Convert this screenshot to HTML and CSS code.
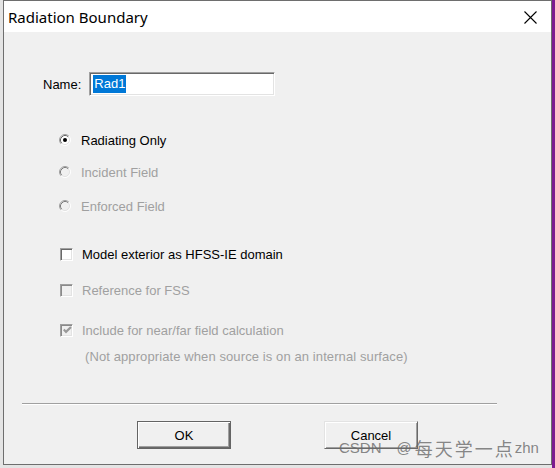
FILE: index.html
```html
<!DOCTYPE html>
<html>
<head>
<meta charset="utf-8">
<link rel="stylesheet" href="styles.css">
</head>
<body>
<div class="dialog">
  <div class="titlebar">
    <span class="title">Radiation Boundary</span>
    <svg class="close" width="13" height="13" viewBox="0 0 13 13"><path d="M0.5 0.5 L12.5 12.5 M12.5 0.5 L0.5 12.5" stroke="#000" stroke-width="1.1" fill="none"/></svg>
  </div>
  <div class="content">
    <div class="name-row">
      <span class="name-label">Name:</span>
      <div class="textbox"><span class="sel">Rad1</span></div>
    </div>

    <div class="opt radio-row row-r1">
      <svg class="radio" width="12" height="12" viewBox="0 0 12 12">
        <circle cx="6" cy="6" r="4.5" fill="#fff"/>
        <path d="M2.11 9.89 A5.5 5.5 0 0 1 9.89 2.11" stroke="#a0a0a0" fill="none"/>
        <path d="M2.82 9.18 A4.5 4.5 0 0 1 9.18 2.82" stroke="#696969" fill="none"/>
        <path d="M9.89 2.11 A5.5 5.5 0 0 1 2.11 9.89" stroke="#ffffff" fill="none"/>
        <path d="M9.18 2.82 A4.5 4.5 0 0 1 2.82 9.18" stroke="#e3e3e3" fill="none"/>
        <circle cx="6" cy="6" r="2" fill="#000"/>
      </svg>
      <span class="label">Radiating Only</span>
    </div>
    <div class="opt radio-row row-r2 disabled">
      <svg class="radio" width="12" height="12" viewBox="0 0 12 12">
        <circle cx="6" cy="6" r="4.5" fill="#f0f0f0"/>
        <path d="M2.11 9.89 A5.5 5.5 0 0 1 9.89 2.11" stroke="#a0a0a0" fill="none"/>
        <path d="M2.82 9.18 A4.5 4.5 0 0 1 9.18 2.82" stroke="#7c7c7c" fill="none"/>
        <path d="M9.89 2.11 A5.5 5.5 0 0 1 2.11 9.89" stroke="#ffffff" fill="none"/>
        <path d="M9.18 2.82 A4.5 4.5 0 0 1 2.82 9.18" stroke="#e3e3e3" fill="none"/>
      </svg>
      <span class="label">Incident Field</span>
    </div>
    <div class="opt radio-row row-r3 disabled">
      <svg class="radio" width="12" height="12" viewBox="0 0 12 12">
        <circle cx="6" cy="6" r="4.5" fill="#f0f0f0"/>
        <path d="M2.11 9.89 A5.5 5.5 0 0 1 9.89 2.11" stroke="#a0a0a0" fill="none"/>
        <path d="M2.82 9.18 A4.5 4.5 0 0 1 9.18 2.82" stroke="#7c7c7c" fill="none"/>
        <path d="M9.89 2.11 A5.5 5.5 0 0 1 2.11 9.89" stroke="#ffffff" fill="none"/>
        <path d="M9.18 2.82 A4.5 4.5 0 0 1 2.82 9.18" stroke="#e3e3e3" fill="none"/>
      </svg>
      <span class="label">Enforced Field</span>
    </div>

    <div class="opt check-row row-c1">
      <span class="checkbox"></span>
      <span class="label">Model exterior as HFSS-IE domain</span>
    </div>
    <div class="opt check-row row-c2 disabled">
      <span class="checkbox"></span>
      <span class="label">Reference for FSS</span>
    </div>
    <div class="opt check-row row-c3 disabled">
      <span class="checkbox">
        <svg width="9" height="9" viewBox="0 0 9 9"><polyline points="0.8,3.6 3,5.9 8,1" stroke="#999" stroke-width="2.2" fill="none"/></svg>
      </span>
      <span class="label">Include for near/far field calculation</span>
    </div>
    <div class="note">(Not appropriate when source is on an internal surface)</div>

    <div class="sep"></div>

    <div class="buttons">
      <div class="btn btn-default">OK</div>
      <div class="btn">Cancel</div>
    </div>
  </div>
</div>
<div class="watermark"><span class="wm-lat">CSDN</span><span class="wm-at">@</span><span class="wm-cjk">每天学一点</span><span class="wm-lat">zhn</span></div>
</body>
</html>
```

FILE: styles.css
```css
* { box-sizing: border-box; }
html, body { margin: 0; padding: 0; }
body {
  width: 555px;
  height: 468px;
  position: relative;
  overflow: hidden;
  background: linear-gradient(to right, #e4e4e4 0, #e4e4e4 552px, #7c1b8f 552px);
  font-family: "Liberation Sans", Arial, sans-serif;
  font-size: 13px;
  color: #000;
}
.dialog {
  margin-left: 3px;
  width: 549px;
  height: 465px;
  border: 1px solid #6e6e6e;
  background: #f0f0f0;
  display: flex;
  flex-direction: column;
}
.titlebar {
  height: 31px;
  flex: none;
  background: #fff;
  display: flex;
  align-items: center;
  padding-left: 4px;
}
.title {
  font-family: "Noto Sans", sans-serif;
  font-size: 15px;
  color: #000;
}
.close {
  margin-left: auto;
  margin-right: 14px;
  margin-top: 1px;
}
.content { flex: 1; }
.name-row {
  display: flex;
  align-items: center;
  height: 24px;
  margin: 40px 0 0 39px;
}
.name-label { color: #000; }
.textbox {
  margin-left: 8px;
  width: 186px;
  height: 24px;
  background: #fff;
  border-top: 1px solid #a0a0a0;
  border-left: 1px solid #a0a0a0;
  border-right: 1px solid #fff;
  border-bottom: 1px solid #fff;
  box-shadow: inset 1px 1px 0 #696969, inset -1px -1px 0 #e3e3e3;
  padding: 2px 0 0 3px;
}
.sel {
  display: inline-block;
  height: 18px;
  line-height: 18px;
  padding: 0 1px;
  background: #0078d7;
  color: #fff;
}
.opt {
  display: flex;
  align-items: center;
  height: 20px;
}
.radio-row { margin-left: 55px; }
.radio { margin-right: 10px; flex: none; }
.check-row { margin-left: 56px; }
.checkbox {
  flex: none;
  width: 13px;
  height: 13px;
  margin-right: 9px;
  background: #fff;
  border-top: 1px solid #a0a0a0;
  border-left: 1px solid #a0a0a0;
  border-right: 1px solid #fff;
  border-bottom: 1px solid #fff;
  box-shadow: inset 1px 1px 0 #696969, inset -1px -1px 0 #e3e3e3;
  display: flex;
  align-items: center;
  justify-content: center;
}
.disabled { color: #a0a0a0; }
.disabled .checkbox {
  background: #f0f0f0;
  box-shadow: inset 1px 1px 0 #8a8a8a, inset -1px -1px 0 #e3e3e3;
}
.checkbox svg { margin: 1px 0 0 1px; }
.row-r1 { margin-top: 34px; }
.row-r2 { margin-top: 12px; }
.row-r3 { margin-top: 14px; }
.row-c1 { margin-top: 28px; }
.row-c2 { margin-top: 16px; }
.row-c3 { margin-top: 20px; }
.note {
  margin: 7px 0 0 81px;
  height: 20px;
  line-height: 20px;
  color: #a0a0a0;
  letter-spacing: 0.1px;
}
.sep {
  margin: 36px 0 0 18px;
  width: 475px;
  height: 2px;
  border-top: 1px solid #a0a0a0;
  border-bottom: 1px solid #fff;
}
.buttons {
  display: flex;
  gap: 93px;
  margin-top: 16px;
  padding-left: 133px;
}
.btn {
  width: 94px;
  height: 28px;
  display: flex;
  align-items: center;
  justify-content: center;
  background: #f0f0f0;
  border: 1px solid;
  border-color: #e3e3e3 #696969 #696969 #e3e3e3;
  box-shadow: inset 1px 1px 0 #fff, inset -1px -1px 0 #a0a0a0;
  color: #000;
}
.btn-default {
  border: 1px solid #646464;
  box-shadow: inset 1px 1px 0 #fff, inset -1px -1px 0 #696969, inset -2px -2px 0 #a0a0a0;
}
.watermark {
  position: absolute;
  left: 339px;
  top: 437px;
  height: 22px;
  line-height: 22px;
  color: rgba(105, 105, 105, 0.8);
  white-space: nowrap;
  display: flex;
  align-items: center;
}
.wm-lat {
  font-family: "Liberation Sans", Arial, sans-serif;
  font-size: 15px;
}
.wm-at {
  font-family: "Liberation Sans", Arial, sans-serif;
  font-size: 15px;
  margin-left: 15px;
  margin-right: 3px;
}
.wm-cjk {
  font-family: "Noto Sans CJK SC", sans-serif;
  font-size: 18px;
  letter-spacing: 2px;
}
```
